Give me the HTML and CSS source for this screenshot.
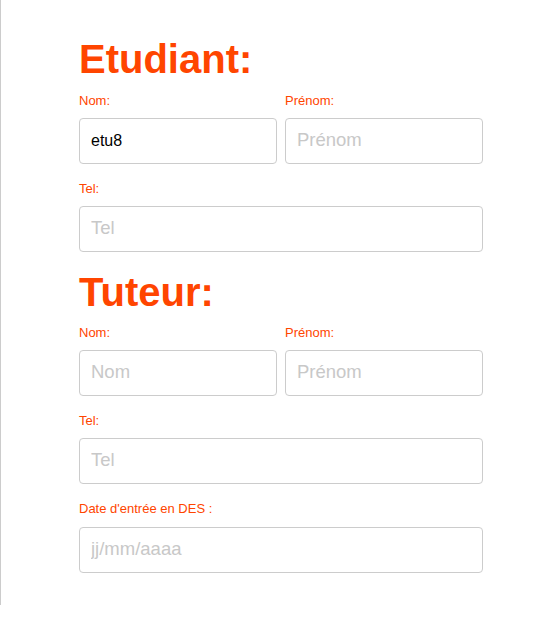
FILE: index.html
```html
<!DOCTYPE html>
<html lang="fr">
<head>
<meta charset="utf-8">
<link rel="stylesheet" href="styles.css">
</head>
<body>
<div class="panel">
  <form class="form">
    <section class="section">
      <h2 class="title title-first">Etudiant:</h2>
      <div class="row">
        <div class="field">
          <label class="label">Nom:</label>
          <input class="input" type="text" value="etu8">
        </div>
        <div class="field">
          <label class="label">Prénom:</label>
          <input class="input" type="text" placeholder="Prénom">
        </div>
      </div>
      <div class="field">
        <label class="label">Tel:</label>
        <input class="input" type="text" placeholder="Tel">
      </div>
    </section>

    <section class="section">
      <h2 class="title">Tuteur:</h2>
      <div class="row">
        <div class="field">
          <label class="label">Nom:</label>
          <input class="input" type="text" placeholder="Nom">
        </div>
        <div class="field">
          <label class="label">Prénom:</label>
          <input class="input" type="text" placeholder="Prénom">
        </div>
      </div>
      <div class="field">
        <label class="label">Tel:</label>
        <input class="input" type="text" placeholder="Tel">
      </div>
      <div class="field">
        <label class="label label-date">Date d'entrée en DES :</label>
        <input class="input" type="text" placeholder="jj/mm/aaaa">
      </div>
    </section>
  </form>
</div>
</body>
</html>
```
FILE: styles.css
```css
html, body {
  margin: 0;
  padding: 0;
  background: #fff;
  font-family: "Liberation Sans", Arial, sans-serif;
}

.panel {
  border-left: 1px solid #cccccc;
  height: 605px;
  box-sizing: border-box;
  padding-left: 78px;
  padding-top: 36px;
}

.form {
  width: 404px;
  display: flex;
  flex-direction: column;
  gap: 17px;
}

.section {
  display: flex;
  flex-direction: column;
}

.title {
  margin: 0 0 10px;
  font-size: 40px;
  line-height: 46px;
  font-weight: bold;
  color: #ff4500;
}

.title-first {
  margin-bottom: 11px;
}

.row {
  display: grid;
  grid-template-columns: 1fr 1fr;
  gap: 8px;
}

.field {
  display: flex;
  flex-direction: column;
  margin-bottom: 17px;
}

.section > .field:last-child {
  margin-bottom: 0;
}

.label {
  font-size: 13px;
  line-height: 15px;
  color: #ff4500;
  margin-bottom: 10px;
}

.label-date {
  margin-bottom: 11px;
}

.input {
  box-sizing: border-box;
  height: 46px;
  width: 100%;
  border: 1px solid #cccccc;
  border-radius: 4px;
  padding: 0 11px;
  font-family: "Liberation Sans", Arial, sans-serif;
  font-size: 16px;
  color: #000;
  background: #fff;
  outline: none;
}

.input::placeholder {
  font-size: 18.5px;
  color: #c8c8c8;
}
```
